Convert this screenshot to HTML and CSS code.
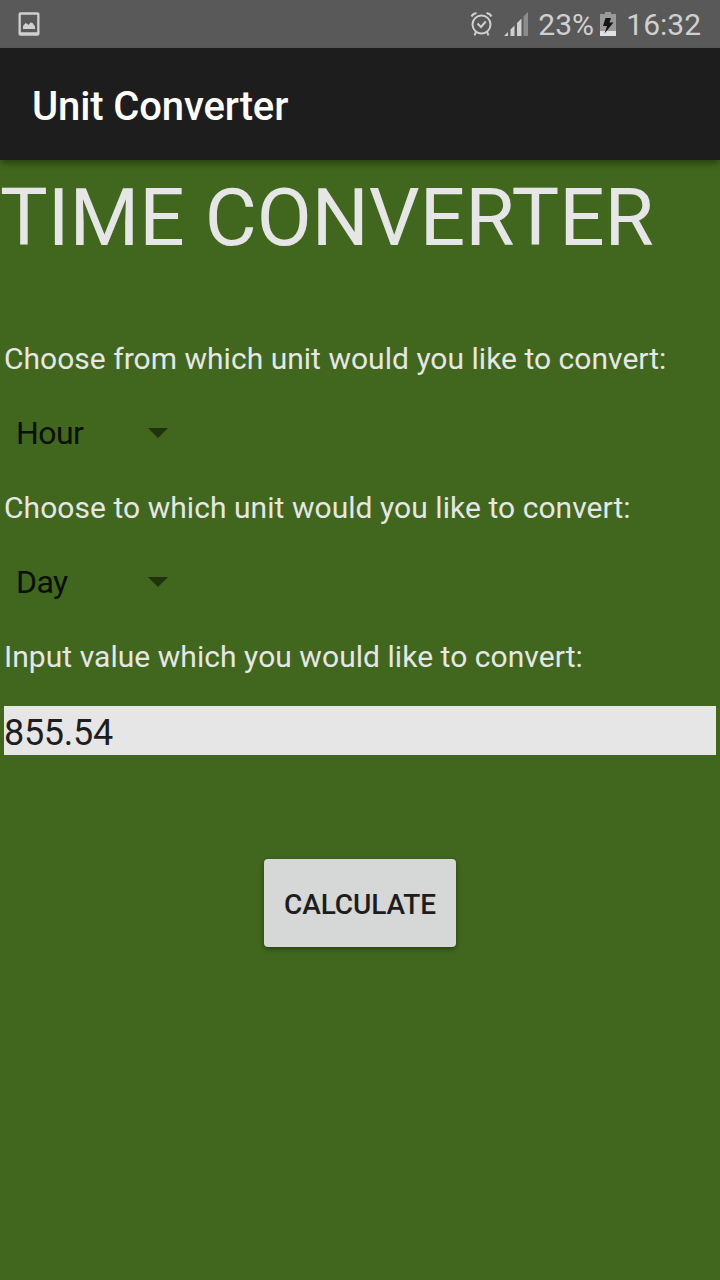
FILE: index.html
```html
<!DOCTYPE html>
<html lang="en">
<head>
<meta charset="utf-8">
<title>Unit Converter</title>
<link rel="stylesheet" href="styles.css">
</head>
<body>
<header class="status">
  <svg class="picture" width="22" height="24" viewBox="0 0 22 24"><path fill-rule="evenodd" d="M2.500 .3h17q2 0 2 2v19.400q0 2-2 2h-17q-2 0-2-2V2.300q0-2 2-2zM2.800 2.800v17.400h16.400V2.800z" fill="#d0d0d0"/><path d="M5 17v-3l2.500-3 2 1 1 1 2-2.500 2 .5 2.500 3.500V17z" fill="#d0d0d0"/></svg>
  <div class="indicators">
    <svg class="alarm" width="24" height="24" viewBox="0 0 24 24" fill="none" stroke="#d0d0d0" stroke-width="2"><circle cx="11.500" cy="12.500" r="9"/><path d="M1.500 4.500Q3 1.500 6.500 1M21.500 4.500Q20 1.500 16.500 1M6 20l-1.500 3.300M17 20l1.500 3.300M7.500 11.500l3.500 3.500 4.800-5.500"/></svg>
    <svg class="signal" width="24" height="24" viewBox="0 0 24 24"><path d="M0 24l4-4v4zM6.500 24v-6.500l4-4V24zM13 24V11l4.500-4.500V24z" fill="#d0d0d0"/><path d="M19.500 24V4.500L24 0v24z" fill="#8c8c8c"/></svg>
    <span class="percent">23%</span>
    <svg class="battery" width="16" height="24" viewBox="0 0 16 24"><path d="M5 0h6v2h5v22H0V2h5z" fill="#999"/><path d="M0 19h16v5H0z" fill="#e0e0e0"/><path d="M5.500 6H11l-1.500 4.500h4L4.500 21.500 7 14H3z" fill="#151515"/></svg>
    <span class="clock">16:32</span>
  </div>
</header>
<div class="appbar">Unit Converter</div>
<main class="content">
  <h1 class="title">TIME CONVERTER</h1>
  <p class="label">Choose from which unit would you like to convert:</p>
  <div class="spinner"><span>Hour</span><i class="arrow"></i></div>
  <p class="label label-wide">Choose to which unit would you like to convert:</p>
  <div class="spinner"><span>Day</span><i class="arrow"></i></div>
  <p class="label label-wide">Input value which you would like to convert:</p>
  <div class="field">855.54</div>
  <button class="calculate">CALCULATE</button>
</main>
</body>
</html>
```
FILE: styles.css
```css
* { box-sizing: border-box; }
body { margin: 0; height: 1280px; background: #40671d; font-family: Roboto, sans-serif; overflow: hidden; }
.status { height: 48px; background: #595959; color: #d0d0d0; display: flex; justify-content: space-between; align-items: center; padding: 0 19px 0 18px; font-size: 30px; }
.indicators { display: flex; align-items: center; }
.signal { margin-left: 10px; }
.percent { margin-left: 10px; width: 56px; }
.battery { margin-left: 6px; }
.clock { margin-left: 10px; }
.appbar { height: 112px; background: #1d1d1d; color: #fff; font-size: 40px; font-weight: 500; line-height: 118px; letter-spacing: -.13px; padding-left: 32px; box-shadow: 0 4px 7px -1px rgba(0,0,0,.4); white-space: nowrap; }
.content { display: flex; flex-direction: column; }
.title { margin: 11px 0 0; height: 94px; font-size: 80px; line-height: 94px; font-weight: 400; color: #e6e6e6; white-space: nowrap; }
.label { margin: 0; padding-left: 4px; height: 40px; line-height: 40px; font-size: 30px; letter-spacing: .02px; color: #e6e6e6; white-space: nowrap; }
.label-wide { letter-spacing: .05px; }
.title + .label { margin-top: 74px; }
.spinner { height: 109px; padding: 0 0 2px 16px; display: flex; align-items: center; font-size: 32px; letter-spacing: -.6px; color: #0a1005; }
.spinner span { width: 132px; }
.arrow { border: 10px solid transparent; border-top-color: #1f330e; border-bottom: 0; }
.field { margin: 29px 4px 0; height: 49px; background: #e6e6e6; color: #1d1d1d; font-size: 36px; letter-spacing: -.3px; line-height: 55px; }
.calculate { align-self: center; margin-top: 104px; width: 192px; height: 88px; border: 0; border-radius: 4px; background: #d6d7d7; color: #1d1d1d; font: 500 28px/84px Roboto, sans-serif; letter-spacing: -.1px; padding: 4px 0 0; box-shadow: 0 2px 5px rgba(0,0,0,.4); }
```
